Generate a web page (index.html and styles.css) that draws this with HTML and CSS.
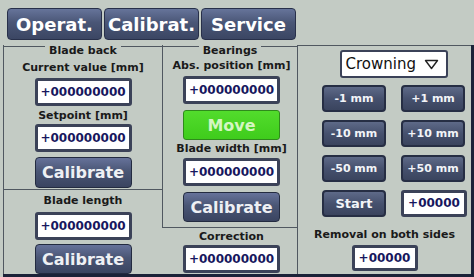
FILE: index.html
```html
<!DOCTYPE html>
<html lang="en">
<head>
  <meta charset="UTF-8">
  <meta name="viewport" content="width=device-width, initial-scale=1.0">
  <title>Saw Calibration</title>
  <link rel="stylesheet" href="styles.css">
</head>
<body>

  <div class="tabs">
    <button class="tab">Operat.</button>
    <button class="tab">Calibrat.</button>
    <button class="tab">Service</button>
  </div>

  <div class="panel">
    <div class="col col-left">
      <div class="group blade-back">
        <div class="legend">Blade back</div>
        <div class="label lbl-current">Current value [mm]</div>
        <div class="field in-current">+000000000</div>
        <div class="label lbl-setpoint">Setpoint [mm]</div>
        <div class="field in-setpoint">+000000000</div>
        <button class="btn btn-cal1">Calibrate</button>
      </div>
      <div class="group blade-length">
        <div class="label lbl-length">Blade length</div>
        <div class="field in-length">+000000000</div>
        <button class="btn btn-cal2">Calibrate</button>
      </div>
    </div>

    <div class="col col-mid">
      <div class="group bearings">
        <div class="legend">Bearings</div>
        <div class="label lbl-abs">Abs. position [mm]</div>
        <div class="field in-abs">+000000000</div>
        <button class="move-btn">Move</button>
        <div class="label lbl-width">Blade width [mm]</div>
        <div class="field in-width">+000000000</div>
        <button class="btn btn-cal3">Calibrate</button>
      </div>
      <div class="group correction">
        <div class="label lbl-corr">Correction</div>
        <div class="field in-corr">+000000000</div>
      </div>
    </div>

    <div class="col col-right">
      <div class="dropdown">
        <span>Crowning</span>
        <svg width="15" height="11" viewBox="0 0 15 11"><path d="M1.5 1.5 H13.5 L7.5 9.5 Z" fill="none" stroke="#222" stroke-width="1.4" stroke-linejoin="round"/></svg>
      </div>
      <div class="jog">
        <button class="small-btn">-1 mm</button>
        <button class="small-btn">+1 mm</button>
        <button class="small-btn">-10 mm</button>
        <button class="small-btn">+10 mm</button>
        <button class="small-btn">-50 mm</button>
        <button class="small-btn">+50 mm</button>
        <button class="small-btn start">Start</button>
        <div class="field short">+00000</div>
      </div>
      <div class="label lbl-removal">Removal on both sides</div>
      <div class="field short in-removal">+00000</div>
    </div>
  </div>

</body>
</html>
```

FILE: styles.css
```css
body {
  margin: 0;
  width: 474px;
  height: 277px;
  overflow: hidden;
  background-color: #c3cbc4;
  font-family: "DejaVu Sans", Verdana, sans-serif;
  color: #1a1a1a;
}

button {
  font-family: inherit;
  padding: 0;
  cursor: pointer;
}

/* top tabs */
.tabs {
  display: flex;
  gap: 2px;
  height: 45px;
  padding: 8px 0 0 7px;
  box-sizing: border-box;
}

.tab {
  width: 95px;
  height: 32px;
  border: 1px solid #28304a;
  border-radius: 4px;
  background: linear-gradient(#66749a, #4a5676 45%, #3b4663);
  color: #fff;
  font-size: 18px;
  font-weight: bold;
}

/* main frame */
.panel {
  display: flex;
  height: 232px;
  margin-left: 3px;
  border-right: 3px solid #1b2238;
  border-bottom: 3px solid #1b2238;
  box-sizing: border-box;
}

.col {
  display: flex;
  flex-direction: column;
  box-sizing: border-box;
}

.col-left {
  width: 159px;
  border-left: 1px solid #505860;
}

.col-mid {
  width: 135px;
}

.col-right {
  flex: 1;
  align-items: center;
  border-left: 1px solid #505860;
  border-top: 1px solid #505860;
}

.group {
  display: flex;
  flex-direction: column;
  align-items: center;
  box-sizing: border-box;
}

.blade-back {
  height: 145px;
  border-bottom: 1px solid #505860;
}

.bearings {
  height: 183px;
  padding-left: 3px;
  border-left: 1px solid #505860;
  border-bottom: 1px solid #505860;
}

.correction {
  padding-left: 4px;
}

.legend {
  align-self: stretch;
  display: flex;
  gap: 4px;
  font-size: 11px;
  line-height: 12px;
  font-weight: bold;
}

.bearings .legend {
  margin-left: -3px;
}

.legend::before,
.legend::after {
  content: "";
  flex: 1;
  margin-top: 1px;
  border-top: 1px solid #505860;
}

.label {
  font-size: 11px;
  line-height: 13px;
  font-weight: bold;
  white-space: nowrap;
}

/* value boxes */
.field {
  width: 97px;
  height: 28px;
  border: 3px solid #3b4258;
  border-radius: 3px;
  background-color: #fff;
  box-sizing: border-box;
  font-size: 12px;
  font-weight: bold;
  line-height: 22px;
  text-align: center;
  color: #17175e;
}

.btn {
  width: 97px;
  height: 31px;
  border: 1px solid #232b40;
  border-radius: 4px;
  background: linear-gradient(#66729a, #4a5675 45%, #3a4460);
  color: #eef0f4;
  font-size: 16px;
  font-weight: bold;
}

.move-btn {
  width: 97px;
  height: 30px;
  margin-top: 6px;
  border: 1px solid #2f8a1c;
  border-radius: 3px;
  background: linear-gradient(#52dc2c, #3fcc1c);
  color: #d4f6c2;
  font-size: 16px;
  font-weight: bold;
}

.lbl-current { margin-top: 4px; }
.in-current { margin-top: 4px; }
.lbl-setpoint { margin-top: 3px; }
.in-setpoint { margin-top: 2px; }
.btn-cal1 { margin-top: 5px; }

.lbl-length { margin-top: 4px; }
.in-length { margin-top: 5px; }
.btn-cal2 { margin-top: 4px; height: 30px; }

.lbl-abs { margin-top: 2px; }
.in-abs { margin-top: 4px; }
.lbl-width { margin-top: 2px; }
.in-width { margin-top: 3px; }
.btn-cal3 { margin-top: 6px; height: 30px; }

.lbl-corr { margin-top: 2px; }
.in-corr { margin-top: 2px; }

/* right side */
.dropdown {
  display: flex;
  align-items: center;
  gap: 8px;
  width: 108px;
  height: 28px;
  margin: 4px 0 0 18px;
  padding-left: 4px;
  border: 2px solid #3b4258;
  border-radius: 3px;
  background-color: #fff;
  box-sizing: border-box;
  font-size: 15px;
  color: #111;
}

.jog {
  display: grid;
  grid-template-columns: 64px 64px;
  column-gap: 15px;
  row-gap: 8px;
  margin: 7px 0 0 18px;
}

.small-btn {
  height: 27px;
  border: 2px solid #262e44;
  border-radius: 4px;
  background: linear-gradient(#5e6a88, #46516e 50%, #3a445e);
  color: #f2f4f8;
  font-size: 11px;
  font-weight: bold;
}

.small-btn.start {
  font-size: 13px;
}

.field.short {
  width: 66px;
  height: 27px;
  line-height: 21px;
  font-size: 12px;
}

.lbl-removal {
  margin-top: 11px;
  font-size: 11px;
}

.field.in-removal {
  margin-top: 4px;
  height: 26px;
  line-height: 20px;
}
```
